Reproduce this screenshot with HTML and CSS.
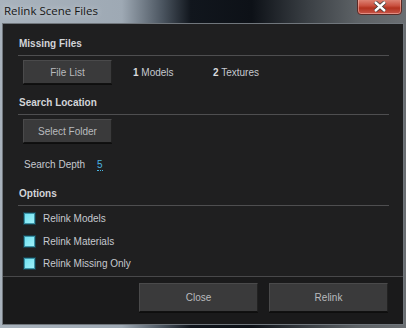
FILE: index.html
```html
<!DOCTYPE html>
<html lang="en">
<head>
  <meta charset="UTF-8" />
  <title>Relink Scene Files</title>
  <link rel="stylesheet" href="styles.css">
</head>
<body>
  <div class="window">
    <div class="titlebar">
      <span class="title">Relink Scene Files</span>
      <button class="win-close">
        <svg width="16" height="11" viewBox="0 0 16 11"><path d="M3 1 L13 10 M13 1 L3 10" stroke="#3a3a3a" stroke-width="4" /><path d="M3 1 L13 10 M13 1 L3 10" stroke="#fff" stroke-width="2.4" /></svg>
      </button>
    </div>

    <div class="client">
      <div class="content">
        <h3 class="section-title">Missing Files</h3>
        <div class="section">
          <div class="row">
            <button class="btn">File List</button>
            <span class="count"><b>1</b> Models</span>
            <span class="count"><b>2</b> Textures</span>
          </div>
        </div>

        <h3 class="section-title">Search Location</h3>
        <div class="section location">
          <button class="btn">Select Folder</button>
          <div class="depth">Search Depth <a class="depth-value">5</a></div>
        </div>

        <h3 class="section-title">Options</h3>
        <div class="section options">
          <label class="check"><span class="box"></span>Relink Models</label>
          <label class="check"><span class="box"></span>Relink Materials</label>
          <label class="check"><span class="box"></span>Relink Missing Only</label>
        </div>
      </div>

      <div class="footer">
        <button class="btn btn-wide">Close</button>
        <button class="btn btn-wide">Relink</button>
      </div>
    </div>
  </div>
</body>
</html>
```

FILE: styles.css
```css
body {
  margin: 0;
  font-family: 'Liberation Sans', Arial, sans-serif;
  font-size: 10px;
  background: #000;
}
.window {
  width: 406px;
  height: 328px;
  display: flex;
  flex-direction: column;
  overflow: hidden;
  background: linear-gradient(to right, #a9b3bd 0%, #9ea9b4 30%, #4b5560 40%, #11161d 47%, #0d1117 62%, #3b4045 76%, #5d6266 88%, #6a6e72 100%);
}
.titlebar {
  height: 23px;
  flex-shrink: 0;
  position: relative;
  display: flex;
  align-items: flex-start;
}
.title {
  font-family: 'Open Sans', sans-serif;
  font-size: 11.5px;
  color: #161616;
  padding: 3px 0 0 4px;
  text-shadow: 0 0 6px rgba(255, 255, 255, 0.6);
}
.win-close {
  position: absolute;
  right: 4px;
  top: -2px;
  width: 45px;
  height: 17px;
  border: 1px solid #5a2a26;
  border-radius: 0 0 4px 4px;
  background: linear-gradient(#e08a7c, #c9503f 45%, #b3321f 60%, #c8564a);
  padding: 0;
  display: flex;
  justify-content: center;
  align-items: center;
  box-shadow: inset 0 0 0 1px rgba(255, 200, 190, 0.5);
}
.client {
  flex: 1;
  min-height: 0;
  margin: 0 2px 3px 2px;
  border: 1px solid #70767c;
  background: #1f1f20;
  display: flex;
  flex-direction: column;
}
.content {
  flex: 1;
  min-height: 0;
  overflow: hidden;
  padding: 13px 14px 0 15px;
}
.section-title {
  margin: 0;
  font-size: 10px;
  line-height: 14px;
  font-weight: bold;
  color: #d2d4d8;
  padding-left: 1px;
  padding-bottom: 4px;
  border-bottom: 1px solid #4e4e50;
}
.section {
  padding: 4px 0 12px 5px;
}
.row {
  display: flex;
  align-items: center;
}
.btn {
  display: block;
  font-family: 'Liberation Sans', Arial, sans-serif;
  font-size: 10px;
  color: #b9bbbe;
  background: #3a3a3b;
  border: 1px solid #4a4a4b;
  border-bottom-color: #111;
  border-right-color: #222;
  width: 89px;
  height: 24px;
  padding: 0;
  box-shadow: 0 1px 0 #0e0e0e;
}
.count {
  color: #c6c9cf;
  margin-left: 21px;
  width: 59px;
}
.count b {
  color: #d8dade;
}
.depth {
  color: #c6c9cf;
  margin-top: 15px;
  padding-left: 1px;
  line-height: 14px;
}
.depth-value {
  color: #4ab4e0;
  margin-left: 9px;
  border-bottom: 1px dotted #4ab4e0;
}
.location {
  padding-bottom: 15px;
}
.options {
  padding-top: 6px;
  display: flex;
  flex-direction: column;
  gap: 9.5px;
}
.check {
  display: flex;
  align-items: center;
  gap: 7px;
  color: #c6c9cf;
  line-height: 13px;
}
.box {
  width: 11px;
  height: 11px;
  border: 1px solid #1a3d48;
  background: linear-gradient(135deg, #6ce0f0, #a4f2fa);
  box-shadow: inset 0 0 0 1px #3a94a8;
}
.footer {
  height: 41px;
  flex-shrink: 0;
  border-top: 1px solid #48484a;
  background: #1a1a1b;
  display: flex;
  justify-content: flex-end;
  align-items: flex-start;
  gap: 11px;
  padding: 6px 15px 0 0;
}
.btn-wide {
  width: 119px;
  height: 29px;
}
```
